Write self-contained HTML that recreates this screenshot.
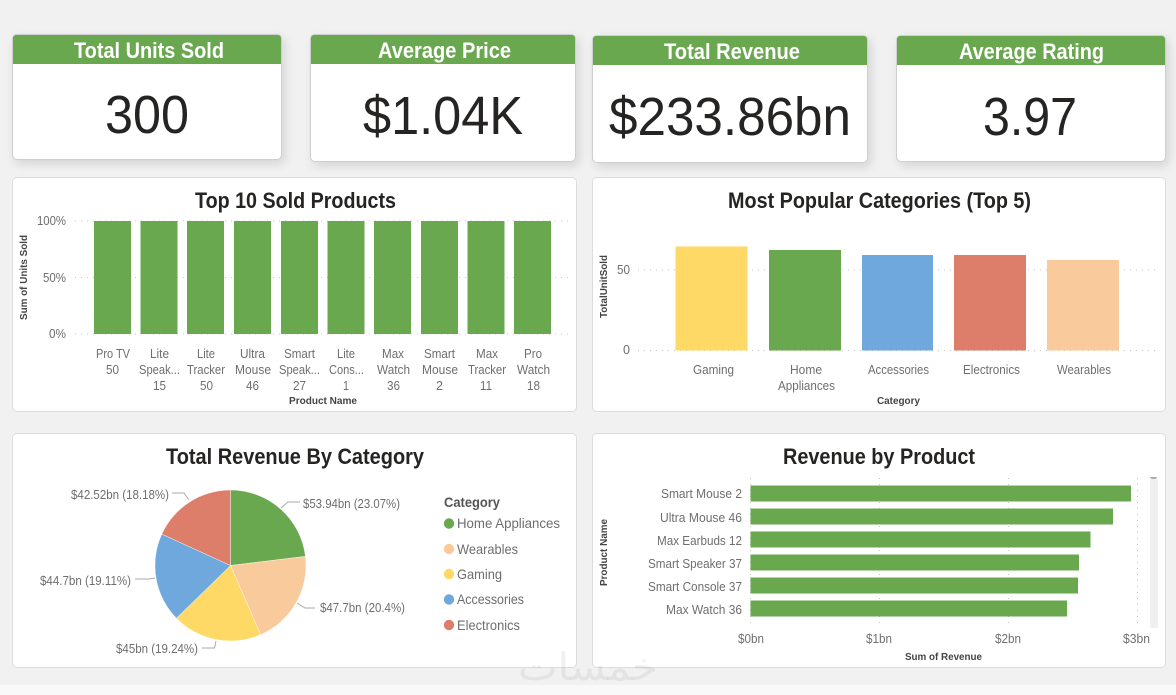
<!DOCTYPE html>
<html>
<head>
<meta charset="utf-8">
<style>
html,body{margin:0;padding:0;width:1176px;height:695px;overflow:hidden;background:#f1f1f1}
body{position:relative;font-family:"Liberation Sans Narrow","Liberation Sans",sans-serif}
.c{position:absolute;background:#fff;border:1px solid #dcdcdc;border-radius:5px;box-sizing:border-box}
.k{box-shadow:3px 4px 10px rgba(0,0,0,.12);border:1.5px solid #cfcfcf}
.h{position:absolute;left:0;right:0;top:0;height:29px;background:#6aa84f;border-radius:3px 3px 0 0}
.foot{position:absolute;left:0;right:0;top:685px;height:10px;background:#f9f9f9}
svg{position:absolute;left:0;top:0}
text{font-family:"Liberation Sans Narrow","Liberation Sans",sans-serif;fill:#6e6e6e;font-size:13px}
.t{font-size:22px;font-weight:700;fill:#252423}
.w{font-size:22px;font-weight:700;fill:#fff}
.n{font-size:54px;fill:#252423}
.a{font-size:10.5px;font-weight:700;fill:#444}
.g{stroke:#c4c4c4;stroke-width:1;stroke-dasharray:1 5;fill:none}
.l{stroke:#aaa;stroke-width:1;fill:none}
</style>
</head>
<body>
<div class="foot"></div>
<div class="c k" style="left:12px;top:34px;width:270px;height:126px"><div class="h"></div></div>
<div class="c k" style="left:310px;top:34px;width:266px;height:128px"><div class="h"></div></div>
<div class="c k" style="left:592px;top:35px;width:276px;height:128px"><div class="h"></div></div>
<div class="c k" style="left:896px;top:35px;width:270px;height:127px"><div class="h"></div></div>
<div class="c" style="left:12px;top:177px;width:565px;height:235px"></div>
<div class="c" style="left:592px;top:177px;width:574px;height:235px"></div>
<div class="c" style="left:12px;top:433px;width:565px;height:235px"></div>
<div class="c" style="left:592px;top:433px;width:574px;height:235px"></div>

<svg width="1176" height="695" viewBox="0 0 1176 695">
<!-- KPI -->
<text class="w" x="74" y="58" textLength="150" lengthAdjust="spacingAndGlyphs">Total Units Sold</text>
<text class="w" x="378" y="58" textLength="133" lengthAdjust="spacingAndGlyphs">Average Price</text>
<text class="w" x="664" y="59" textLength="136" lengthAdjust="spacingAndGlyphs">Total Revenue</text>
<text class="w" x="959" y="59" textLength="145" lengthAdjust="spacingAndGlyphs">Average Rating</text>
<text class="n" x="105" y="133" textLength="84" lengthAdjust="spacingAndGlyphs">300</text>
<text class="n" x="363" y="134" textLength="160" lengthAdjust="spacingAndGlyphs">$1.04K</text>
<text class="n" x="609" y="135" textLength="242" lengthAdjust="spacingAndGlyphs">$233.86bn</text>
<text class="n" x="983" y="135" textLength="94" lengthAdjust="spacingAndGlyphs">3.97</text>

<!-- Titles -->
<text class="t" x="195" y="208" textLength="201" lengthAdjust="spacingAndGlyphs">Top 10 Sold Products</text>
<text class="t" x="728" y="208" textLength="303" lengthAdjust="spacingAndGlyphs">Most Popular Categories (Top 5)</text>
<text class="t" x="166" y="464" textLength="258" lengthAdjust="spacingAndGlyphs">Total Revenue By Category</text>
<text class="t" x="783" y="464" textLength="192" lengthAdjust="spacingAndGlyphs">Revenue by Product</text>

<!-- Chart A -->
<path class="g" d="M75 221H573M75 277.500H573M75 334H573"/>
<g fill="#6aa84f">
<rect x="94" y="221" width="37" height="113"/><rect x="140.500" y="221" width="37" height="113"/><rect x="187" y="221" width="37" height="113"/><rect x="234" y="221" width="37" height="113"/><rect x="281" y="221" width="37" height="113"/><rect x="327.500" y="221" width="37" height="113"/><rect x="374" y="221" width="37" height="113"/><rect x="421" y="221" width="37" height="113"/><rect x="467.500" y="221" width="37" height="113"/><rect x="514" y="221" width="37" height="113"/>
</g>
<text x="37" y="225" textLength="29" lengthAdjust="spacingAndGlyphs">100%</text>
<text x="43" y="282" textLength="23" lengthAdjust="spacingAndGlyphs">50%</text>
<text x="49" y="338" textLength="17" lengthAdjust="spacingAndGlyphs">0%</text>
<text class="a" transform="translate(27,320) rotate(-90)" textLength="85" lengthAdjust="spacingAndGlyphs">Sum of Units Sold</text>

<text x="96" y="358" textLength="34" lengthAdjust="spacingAndGlyphs">Pro TV</text><text x="106" y="374" textLength="13" lengthAdjust="spacingAndGlyphs">50</text>
<text x="150" y="358" textLength="19" lengthAdjust="spacingAndGlyphs">Lite</text><text x="139" y="374" textLength="41" lengthAdjust="spacingAndGlyphs">Speak...</text><text x="153" y="390" textLength="13" lengthAdjust="spacingAndGlyphs">15</text>
<text x="197" y="358" textLength="18" lengthAdjust="spacingAndGlyphs">Lite</text><text x="187" y="374" textLength="38" lengthAdjust="spacingAndGlyphs">Tracker</text><text x="200" y="390" textLength="13" lengthAdjust="spacingAndGlyphs">50</text>
<text x="240" y="358" textLength="25" lengthAdjust="spacingAndGlyphs">Ultra</text><text x="235" y="374" textLength="36" lengthAdjust="spacingAndGlyphs">Mouse</text><text x="246" y="390" textLength="13" lengthAdjust="spacingAndGlyphs">46</text>
<text x="284" y="358" textLength="31" lengthAdjust="spacingAndGlyphs">Smart</text><text x="279" y="374" textLength="41" lengthAdjust="spacingAndGlyphs">Speak...</text><text x="293" y="390" textLength="13" lengthAdjust="spacingAndGlyphs">27</text>
<text x="337" y="358" textLength="18" lengthAdjust="spacingAndGlyphs">Lite</text><text x="329" y="374" textLength="35" lengthAdjust="spacingAndGlyphs">Cons...</text><text x="343" y="390" textLength="6" lengthAdjust="spacingAndGlyphs">1</text>
<text x="382" y="358" textLength="22" lengthAdjust="spacingAndGlyphs">Max</text><text x="377" y="374" textLength="33" lengthAdjust="spacingAndGlyphs">Watch</text><text x="387" y="390" textLength="13" lengthAdjust="spacingAndGlyphs">36</text>
<text x="424" y="358" textLength="31" lengthAdjust="spacingAndGlyphs">Smart</text><text x="422" y="374" textLength="36" lengthAdjust="spacingAndGlyphs">Mouse</text><text x="436" y="390" textLength="7" lengthAdjust="spacingAndGlyphs">2</text>
<text x="476" y="358" textLength="22" lengthAdjust="spacingAndGlyphs">Max</text><text x="468" y="374" textLength="38" lengthAdjust="spacingAndGlyphs">Tracker</text><text x="480" y="390" textLength="12" lengthAdjust="spacingAndGlyphs">11</text>
<text x="524" y="358" textLength="18" lengthAdjust="spacingAndGlyphs">Pro</text><text x="517" y="374" textLength="33" lengthAdjust="spacingAndGlyphs">Watch</text><text x="527" y="390" textLength="13" lengthAdjust="spacingAndGlyphs">18</text>
<text class="a" x="289" y="404" textLength="68" lengthAdjust="spacingAndGlyphs">Product Name</text>

<!-- Chart B -->
<path class="g" d="M638 270H1160M638 350.500H1160"/>
<rect x="675.500" y="246.500" width="72" height="104" fill="#ffd966"/>
<rect x="769" y="250" width="72" height="100.500" fill="#6aa84f"/>
<rect x="862" y="255" width="71" height="95.500" fill="#6fa8dc"/>
<rect x="954" y="255" width="72" height="95.500" fill="#dd7e6b"/>
<rect x="1047" y="260" width="72" height="90.500" fill="#f9cb9c"/>
<text x="617" y="274" textLength="13" lengthAdjust="spacingAndGlyphs">50</text>
<text x="623" y="354" textLength="7" lengthAdjust="spacingAndGlyphs">0</text>
<text class="a" transform="translate(607,318) rotate(-90)" textLength="63" lengthAdjust="spacingAndGlyphs">TotalUnitSold</text>
<text x="693" y="374" textLength="41" lengthAdjust="spacingAndGlyphs">Gaming</text>
<text x="790" y="374" textLength="32" lengthAdjust="spacingAndGlyphs">Home</text>
<text x="778" y="390" textLength="57" lengthAdjust="spacingAndGlyphs">Appliances</text>
<text x="868" y="374" textLength="61" lengthAdjust="spacingAndGlyphs">Accessories</text>
<text x="963" y="374" textLength="57" lengthAdjust="spacingAndGlyphs">Electronics</text>
<text x="1057" y="374" textLength="54" lengthAdjust="spacingAndGlyphs">Wearables</text>
<text class="a" x="877" y="404" textLength="43" lengthAdjust="spacingAndGlyphs">Category</text>

<!-- Pie -->
<g stroke="#fff" stroke-width=".4">
<path d="M230.500 565.500L230.500 490A75.500 75.500 0 0 1 305.450 556.400Z" fill="#6aa84f"/>
<path d="M230.500 565.500L305.450 556.400A75.500 75.500 0 0 1 260.600 634.700Z" fill="#f9cb9c"/>
<path d="M230.500 565.500L260.600 634.700A75.500 75.500 0 0 1 176.400 618.200Z" fill="#ffd966"/>
<path d="M230.500 565.500L176.400 618.200A75.500 75.500 0 0 1 161.800 534.100Z" fill="#6fa8dc"/>
<path d="M230.500 565.500L161.800 534.100A75.500 75.500 0 0 1 230.500 490Z" fill="#dd7e6b"/>
</g>
<path class="l" d="M281 508L288 502H300M297 603L305 608H315M202 648H214.500L216 641M135 579H149L155 578M172 493H184L189 500"/>
<text x="71" y="499" font-size="12" textLength="98" lengthAdjust="spacingAndGlyphs">$42.52bn (18.18%)</text>
<text x="303" y="508" font-size="12" textLength="97" lengthAdjust="spacingAndGlyphs">$53.94bn (23.07%)</text>
<text x="40" y="585" font-size="12" textLength="91" lengthAdjust="spacingAndGlyphs">$44.7bn (19.11%)</text>
<text x="320" y="612" font-size="12" textLength="85" lengthAdjust="spacingAndGlyphs">$47.7bn (20.4%)</text>
<text x="116" y="653" font-size="12" textLength="82" lengthAdjust="spacingAndGlyphs">$45bn (19.24%)</text>
<text x="444" y="507" style="font-size:14px;font-weight:700;fill:#555" textLength="56" lengthAdjust="spacingAndGlyphs">Category</text>
<circle cx="449" cy="523.500" r="5.200" fill="#6aa84f"/><text x="457" y="528" style="font-size:14px" textLength="103" lengthAdjust="spacingAndGlyphs">Home Appliances</text>
<circle cx="449" cy="549" r="5.200" fill="#f9cb9c"/><text x="457" y="554" style="font-size:14px" textLength="61" lengthAdjust="spacingAndGlyphs">Wearables</text>
<circle cx="449" cy="574" r="5.200" fill="#ffd966"/><text x="457" y="579" style="font-size:14px" textLength="45" lengthAdjust="spacingAndGlyphs">Gaming</text>
<circle cx="449" cy="599.500" r="5.200" fill="#6fa8dc"/><text x="457" y="604" style="font-size:14px" textLength="67" lengthAdjust="spacingAndGlyphs">Accessories</text>
<circle cx="449" cy="625" r="5.200" fill="#dd7e6b"/><text x="457" y="630" style="font-size:14px" textLength="63" lengthAdjust="spacingAndGlyphs">Electronics</text>

<!-- Chart D -->
<path class="g" d="M750.500 478V628M879.500 478V628M1008.500 478V628M1137.500 478V628"/>
<g fill="#6aa84f">
<rect x="750.500" y="485.500" width="380.500" height="16"/>
<rect x="750.500" y="508.500" width="362.500" height="16"/>
<rect x="750.500" y="531.500" width="340" height="16"/>
<rect x="750.500" y="554.500" width="328.500" height="16"/>
<rect x="750.500" y="577.500" width="327.500" height="16"/>
<rect x="750.500" y="600.500" width="316.500" height="16"/>
</g>
<rect x="1150" y="478" width="8" height="150" rx="2" fill="#f0f0f0"/>
<path d="M1150 477H1157L1155.500 479H1151.500Z" fill="#aaa"/>
<text x="661" y="498" textLength="81" lengthAdjust="spacingAndGlyphs">Smart Mouse 2</text>
<text x="660" y="522" textLength="82" lengthAdjust="spacingAndGlyphs">Ultra Mouse 46</text>
<text x="657" y="545" textLength="85" lengthAdjust="spacingAndGlyphs">Max Earbuds 12</text>
<text x="648" y="568" textLength="94" lengthAdjust="spacingAndGlyphs">Smart Speaker 37</text>
<text x="648" y="591" textLength="94" lengthAdjust="spacingAndGlyphs">Smart Console 37</text>
<text x="666" y="614" textLength="76" lengthAdjust="spacingAndGlyphs">Max Watch 36</text>
<text x="738" y="643" textLength="26" lengthAdjust="spacingAndGlyphs">$0bn</text>
<text x="866" y="643" textLength="26" lengthAdjust="spacingAndGlyphs">$1bn</text>
<text x="995" y="643" textLength="26" lengthAdjust="spacingAndGlyphs">$2bn</text>
<text x="1123" y="643" textLength="27" lengthAdjust="spacingAndGlyphs">$3bn</text>
<text class="a" x="905" y="660" textLength="77" lengthAdjust="spacingAndGlyphs">Sum of Revenue</text>
<text class="a" transform="translate(607,586) rotate(-90)" textLength="67" lengthAdjust="spacingAndGlyphs">Product Name</text>

<!-- Watermark -->
<text x="518" y="680" style="font-family:'DejaVu Sans',sans-serif;font-size:38px;fill:rgba(120,120,120,.11)" textLength="140" lengthAdjust="spacingAndGlyphs">خمسات</text>
</svg>
</body>
</html>
